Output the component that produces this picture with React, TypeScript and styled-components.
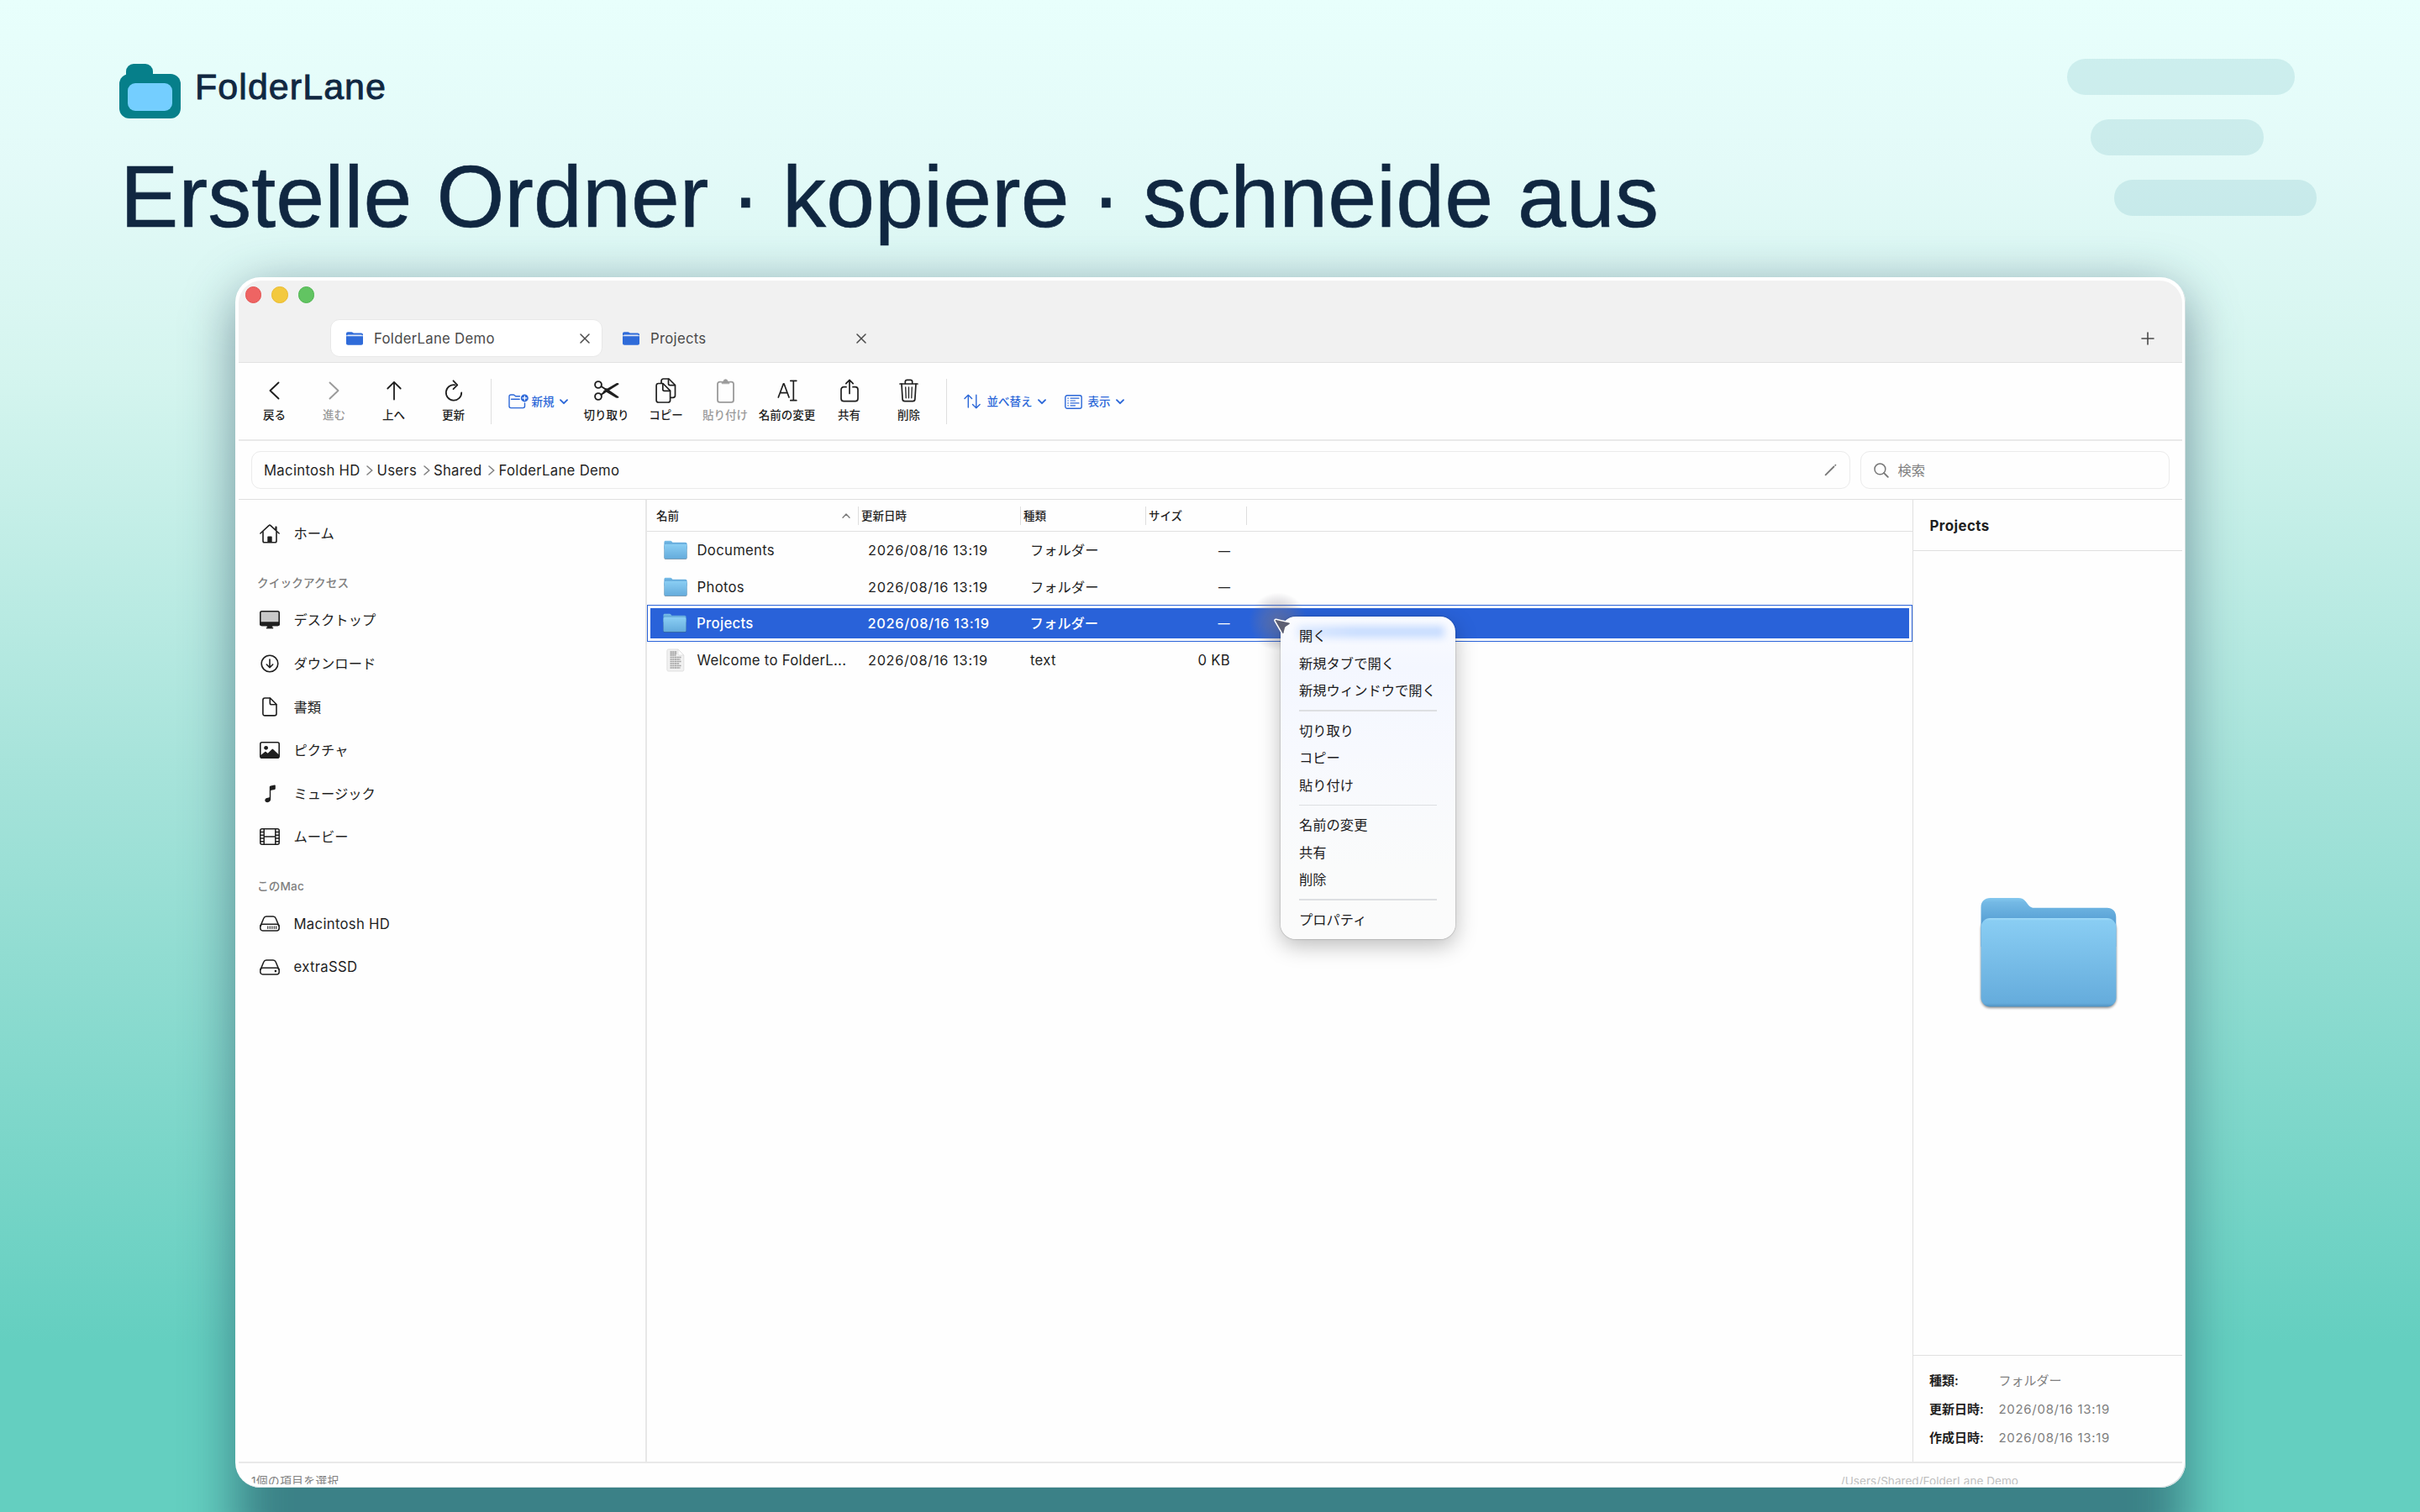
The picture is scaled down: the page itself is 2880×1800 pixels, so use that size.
import React from "react";
import styled, { createGlobalStyle, css } from "styled-components";

const UI_FONT = `Inter, "Noto Sans CJK JP", sans-serif`;

const GlobalStyle = createGlobalStyle`
  html, body { margin: 0; padding: 0; }
  body { width: 2880px; height: 1800px; overflow: hidden; }
  * { box-sizing: border-box; }
`;

/* ---------- poster ---------- */

const Poster = styled.div`
  position: relative;
  width: 2880px;
  height: 1800px;
  overflow: hidden;
  background: linear-gradient(180deg, #e8fffc 0, #e3faf8 200px, #d5f5ef 440px, #a6e3da 920px, #64cfc0 1600px, #64cfc0 1800px);
  color: #102741;
`;

const Hero = styled.header`
  height: 330px;
  padding: 76px 0 0 141px;
`;

const Brand = styled.div`
  display: flex;
  align-items: flex-start;
  height: 66px;
`;

const BrandName = styled.span`
  margin: 2px 0 0 15px;
  font: 400 43px/50px "Liberation Sans", Arial, sans-serif;
  letter-spacing: 1.05px;
  -webkit-text-stroke: 0.9px #102741;
`;

const Headline = styled.h1`
  margin: 32px 0 0 2px;
  font: 400 104px/120px "Liberation Sans", Arial, sans-serif;
  letter-spacing: 0.08px;
  white-space: nowrap;
  -webkit-text-stroke: 0.6px #102741;
`;

const Dot = styled.span`
  margin: 0 -2.6px;
`;

const Lane = styled.div<{ $x: number; $y: number; $w: number }>`
  position: absolute;
  left: ${(p) => p.$x}px;
  top: ${(p) => p.$y}px;
  width: ${(p) => p.$w}px;
  height: 43px;
  border-radius: 22px;
  background: rgba(6, 127, 138, 0.115);
`;

const FrameShadow = styled.div`
  position: absolute;
  left: 280px;
  top: 344px;
  width: 2321px;
  height: 1530px;
  border-radius: 40px;
  background: rgba(13, 42, 70, 0.47);
  filter: blur(31px);
`;

const Frame = styled.main`
  position: relative;
  width: 2321px;
  height: 1441px;
  margin-left: 280px;
  padding: 4px;
  border-radius: 30px;
  background: #fff;
  box-shadow: inset -1px -1px 0 #d3dfe0;
`;

const Win = styled.div`
  display: flex;
  flex-direction: column;
  width: 2313px;
  height: 1433px;
  border-radius: 27px;
  overflow: hidden;
  background: #fefefe;
  color: #1f1f1f;
  font: 400 16.3px/20px ${UI_FONT};
  white-space: nowrap;
  & > * { flex: none; }
`;

const Latin = styled.span`
  font-size: 16.7px;
  letter-spacing: 0.3px;
`;

const Digits = styled.span`
  letter-spacing: 0.7px;
`;

/* ---------- title bar ---------- */

const TitleBar = styled.div`
  height: 98px;
  background: #f1f1f1;
  border-bottom: 1px solid #e2e2e2;
`;

const Lights = styled.div`
  display: flex;
  align-items: center;
  gap: 12px;
  height: 34px;
  padding-left: 8px;
`;

const Light = styled.i<{ $fill: string; $edge: string }>`
  width: 19.4px;
  height: 19.4px;
  border-radius: 50%;
  background: ${(p) => p.$fill};
  border: 1px solid ${(p) => p.$edge};
`;

const Tabs = styled.div`
  display: flex;
  align-items: center;
  gap: 5px;
  margin-top: 12px;
  padding: 0 33px 0 109px;
`;

const Tab = styled.div<{ $active?: boolean }>`
  display: flex;
  align-items: center;
  width: 324px;
  height: 45px;
  padding: 0 14px 0 18px;
  border-radius: 11px;
  border: 1px solid transparent;
  color: #4a4a4a;
  ${(p) => p.$active && css`
    background: #fff;
    border-color: #e8e8e8;
  `}
`;

const TabLabel = styled.span`
  flex: 1;
  margin-left: 13px;
`;

const NewTab = styled.span`
  display: flex;
  margin-left: auto;
`;

/* ---------- toolbar ---------- */

const Toolbar = styled.div`
  display: flex;
  align-items: center;
  height: 93px;
  padding-left: 7px;
  border-bottom: 2px solid #e9e9e9;
`;

const ToolButton = styled.div<{ $w?: number; $off?: boolean }>`
  display: flex;
  flex-direction: column;
  align-items: center;
  gap: 7px;
  width: ${(p) => p.$w ?? 71}px;
  height: 55px;
  margin-top: 2px;
  font-size: 13.5px;
  font-weight: 500;
  line-height: 16px;
  color: ${(p) => (p.$off ? "#9a9a9a" : "#1f1f1f")};
`;

const IconBox = styled.span`
  display: flex;
  align-items: center;
  justify-content: center;
  height: 28px;
`;

const ToolDivider = styled.i<{ $before: number; $after: number }>`
  width: 1.5px;
  height: 54px;
  margin: 0 ${(p) => p.$after}px 0 ${(p) => p.$before}px;
  background: #dfdfdf;
`;

const MenuButton = styled.div<{ $gap: number; $after: number }>`
  display: flex;
  align-items: center;
  margin: 1px ${(p) => p.$after}px 0 0;
  font-size: 13.5px;
  font-weight: 500;
  color: #2b67d8;
  & > span { margin: 0 6px 0 ${(p) => p.$gap}px; }
`;

/* ---------- address row ---------- */

const AddressRow = styled.div`
  display: flex;
  gap: 12px;
  height: 70px;
  padding: 12px 15px 0 14.5px;
  border-bottom: 1px solid #e0e0e0;
`;

const Field = styled.div<{ $w?: number }>`
  display: flex;
  align-items: center;
  height: 45px;
  border: 1.5px solid #ebebeb;
  border-radius: 11px;
  ${(p) => (p.$w ? `width: ${p.$w}px; padding-left: 15px;` : "flex: 1; padding: 0 15px 0 14.5px;")}
`;

const Crumb = styled(Latin)`
  margin-right: 7.5px;
`;

const CrumbArrow = styled.span`
  display: flex;
  margin-right: 4.4px;
`;

const Push = styled.span`
  display: flex;
  margin-left: auto;
`;

const Placeholder = styled.span`
  margin-left: 10.5px;
  color: #808080;
`;

/* ---------- body ---------- */

const Body = styled.div`
  display: flex;
  height: 1147px;
  border-bottom: 2px solid #e9e9e9;
`;

const Sidebar = styled.nav`
  width: 486px;
  padding: 14.5px 0 0 25px;
  border-right: 2px solid #e7e7e7;
`;

const SideItem = styled.div`
  display: flex;
  align-items: center;
  height: 51.6px;
`;

const SideIcon = styled.span`
  display: flex;
  justify-content: center;
  width: 24px;
  margin-right: 16.5px;
`;

const SideLabel = styled.div`
  display: flex;
  align-items: flex-end;
  height: 51.6px;
  margin-left: -3px;
  padding-bottom: 8.5px;
  font-size: 13.6px;
  font-weight: 500;
  letter-spacing: 0.15px;
  color: #808080;
`;

const List = styled.section`
  width: 1506px;
`;

const COLS = "252px 193px 149px 120px";

const ListHead = styled.div`
  display: grid;
  grid-template-columns: ${COLS};
  align-items: center;
  height: 38px;
  border-bottom: 1px solid #e0e0e0;
  font-size: 13.5px;
  font-weight: 500;
`;

const HeadCell = styled.div<{ $pad: number }>`
  display: flex;
  align-items: center;
  justify-content: space-between;
  height: 22px;
  padding: 1px 9px 0 ${(p) => p.$pad}px;
  border-right: 1.5px solid #dedede;
`;

const Row = styled.div<{ $selected?: boolean }>`
  height: 43.5px;
  padding-top: 1px;
  color: ${(p) => (p.$selected ? "#fff" : "#1f1f1f")};
  ${(p) => p.$selected && css`
    padding: 2.6px;
    border: 1.4px solid #2962d9;
    font-weight: 500;
  `}
`;

const RowFill = styled.div<{ $selected?: boolean }>`
  display: grid;
  grid-template-columns: ${COLS};
  align-items: center;
  height: 100%;
  ${(p) => p.$selected && css`
    background: #2962d9;
    grid-template-columns: 248px 193px 149px 120px;
    & > div:first-child { padding-left: 15.5px; }
  `}
`;

const NameCell = styled.div`
  display: flex;
  align-items: center;
  padding-left: 19.5px;
`;

const FileIcon = styled.span`
  display: flex;
  justify-content: center;
  width: 28px;
  margin-right: 12px;
`;

const Cell = styled.div<{ $end?: boolean }>`
  padding-left: 11px;
  ${(p) => p.$end && "padding-right: 20px; text-align: right;"}
`;

const Dash = styled.span`
  font-size: 14px;
`;

/* ---------- preview ---------- */

const Preview = styled.aside`
  display: flex;
  flex-direction: column;
  flex: 1;
  border-left: 1px solid #e0e0e0;
`;

const PreviewTitle = styled.div`
  display: flex;
  align-items: center;
  height: 61px;
  padding: 1px 0 0 19.5px;
  border-bottom: 1px solid #e0e0e0;
  font-size: 16.9px;
  font-weight: 700;
  letter-spacing: 0.4px;
`;

const PreviewArt = styled.div`
  display: flex;
  flex: 1;
  align-items: center;
  justify-content: center;
  padding: 1px 0 0 2px;
`;

const Facts = styled.dl`
  display: grid;
  grid-template-columns: 82.5px 1fr;
  grid-auto-rows: 34px;
  align-items: center;
  height: 127px;
  margin: 0;
  padding: 12.5px 0 0 19px;
  border-top: 1px solid #e0e0e0;
  font-size: 15px;
  & > dt { font-weight: 600; }
  & > dd { margin: 0; color: #808080; }
`;

const StatusBar = styled.footer`
  display: flex;
  justify-content: space-between;
  padding: 11px 195px 0 15px;
  font-size: 13.6px;
  color: #808080;
  & > span:first-child { letter-spacing: 0.5px; }
  & > span:last-child { color: #c0c0c0; }
`;

/* ---------- context menu ---------- */

const CursorGlow = styled.div`
  position: absolute;
  left: 1206px;
  top: 375px;
  width: 70px;
  height: 70px;
  border-radius: 50%;
  background: radial-gradient(circle, rgba(125, 118, 130, 0.58) 0, rgba(125, 120, 135, 0.34) 35%, rgba(140, 140, 150, 0) 70%);
`;

const Menu = styled.div`
  position: absolute;
  left: 1244px;
  top: 404px;
  width: 208px;
  height: 384px;
  padding: 7px 22px;
  border-radius: 18px;
  overflow: hidden;
  background: linear-gradient(180deg, #fbfcff 0, #f4f7ff 60px, #f7f9fe 160px, #fafbfb 300px, #fbfbfb 100%);
  box-shadow: 0 0 1.5px rgba(0, 0, 0, 0.5), 0 8px 26px rgba(0, 0, 0, 0.26);
  font-size: 16.3px;
  font-family: ${UI_FONT};
  color: #1c1c1e;
  white-space: nowrap;
  &::before {
    content: "";
    position: absolute;
    left: 20px;
    top: 11px;
    width: 175px;
    height: 14px;
    background: linear-gradient(90deg, #dbe8ff, #c6dbff 40%, #c6dbff);
    filter: blur(5px);
  }
`;

const MenuItem = styled.div`
  position: relative;
  height: 32.7px;
  line-height: 32.7px;
`;

const MenuRule = styled.i`
  display: block;
  height: 1.4px;
  margin: 6.3px 0 6.8px;
  background: #dddfe2;
`;

const Pointer = styled.svg`
  position: absolute;
  left: 1234px;
  top: 404px;
`;

/* ---------- drawings ---------- */

const stroke = {
  fill: "none",
  stroke: "currentColor",
  strokeWidth: 1.6,
  strokeLinecap: "round" as const,
  strokeLinejoin: "round" as const,
};

const BrandMark = () => (
  <svg width="76" height="66" viewBox="0 0 76 66">
    <rect x="9" y="0" width="32" height="30" rx="9" fill="#067f8a" />
    <rect x="1" y="12" width="73" height="53" rx="12" fill="#067f8a" />
    <rect x="11" y="23" width="53" height="33" rx="9" fill="#74ceff" />
  </svg>
);

const TabFolder = () => (
  <svg width="20" height="16" viewBox="0 0 20 16" fill="#2f6bd9">
    <path d="M0 4V2.4C0 1 .8.3 2 .3h4.2c.8 0 1.300.2 1.900.7l.7.6h9c1.400 0 2.200.8 2.200 2.100V4z" />
    <path d="M0 5.300h20v8.300c0 1.400-.8 2.200-2.200 2.200H2.200C.8 15.800 0 15 0 13.600z" />
    <path d="M0 3.700h20v1.900H0z" opacity=".35" />
    <path d="M1.500 4.100h17" stroke="#fff" strokeWidth="1" />
  </svg>
);

const Close = () => (
  <svg width="12" height="12" viewBox="0 0 12 12" {...stroke} strokeWidth={1.5}>
    <path d="M1 1l10 10M11 1L1 11" />
  </svg>
);

const Plus = () => (
  <svg width="16" height="16" viewBox="0 0 16 16" {...stroke} stroke="#4a4a4a">
    <path d="M8 1v14M1 8h14" />
  </svg>
);

const ChevronBig = ({ flip }: { flip?: boolean }) => (
  <svg width="13" height="22" viewBox="0 0 13 22" {...stroke} strokeWidth={1.9}>
    <path d={flip ? "M1.500 1.500L11.500 11l-10 9.500" : "M11.500 1.500L1.500 11l10 9.500"} />
  </svg>
);

const ArrowUp = () => (
  <svg width="18" height="24" viewBox="0 0 18 24" {...stroke} strokeWidth={1.8}>
    <path d="M9 22.500V1.800M1.300 9.500L9 1.800l7.700 7.700" />
  </svg>
);

const Refresh = () => (
  <svg width="22" height="27" viewBox="0 0 22 27" {...stroke} strokeWidth={1.8}>
    <path d="M12.500 6.300A9.200 9.200 0 1 0 20.200 15.400" />
    <path d="M10.500 1.300l4.800 5.100-4.800 4.800" />
  </svg>
);

const Scissors = () => (
  <svg width="30" height="24" viewBox="0 0 30 24" fill="none" stroke="currentColor" strokeWidth="1.9">
    <circle cx="5" cy="5" r="3.900" />
    <circle cx="5" cy="19" r="3.900" />
    <path d="M8.500 7l4.200 2.800M8.500 17l3.400-3" strokeLinecap="round" />
    <path d="M10.500 14.300L11.500 12L26.500 3.200c1.200-.6 2.600-.3 3 .6.200.400 0 .7-.4.900L14 14.300l-3 1.900z" fill="currentColor" stroke="none" />
    <path d="M11.500 8.900l3.400.4L29.200 19.200c.4.300.4.700.1 1-.8.8-2.200.8-3.300.2L15 14z" fill="currentColor" stroke="none" />
  </svg>
);

const CopyIcon = () => (
  <svg width="25" height="30" viewBox="0 0 25 30" {...stroke} strokeWidth={1.7}>
    <path d="M7 6V3.700C7 2 7.900 1 9.600 1H16l7.500 7.500v12.300c0 1.700-.9 2.600-2.600 2.600h-2.600" />
    <path d="M15.500 1.300v5.400c0 1.300.6 1.900 1.900 1.900h5.700" />
    <path d="M3.700 6.500H9l8.600 8.600v11.300c0 1.700-.9 2.600-2.600 2.600H3.700C2 29 1.100 28.100 1.100 26.400V9.100c0-1.700.9-2.600 2.600-2.600z" fill="#fefefe" />
    <path d="M8.800 6.800v6.600c0 1.300.6 1.900 1.900 1.900h6.600" />
  </svg>
);

const PasteIcon = () => (
  <svg width="21" height="29" viewBox="0 0 21 29" {...stroke} strokeWidth={1.8}>
    <path d="M5.500 3.700H3.600C2 3.700 1 4.600 1 6.300v18.900c0 1.700 1 2.600 2.600 2.600h13.800c1.600 0 2.600-.9 2.600-2.600V6.300c0-1.700-1-2.600-2.600-2.600h-1.900" />
    <path d="M6.200 5.400V4.200c0-.8.500-1.200 1.300-1.200h.7a2.300 2.300 0 0 1 4.600 0h.7c.8 0 1.300.4 1.300 1.200v1.200z" fill="currentColor" strokeWidth=".8" />
  </svg>
);

const RenameIcon = () => (
  <svg width="24" height="26" viewBox="0 0 24 26" {...stroke} strokeWidth={1.7}>
    <path d="M1.300 21L7.400 4.800h.6L14 21M3.400 15.600h8.600" />
    <path d="M19.300 1.500v23M15.800 1.300h7M15.800 24.700h7" />
  </svg>
);

const ShareIcon = () => (
  <svg width="22" height="28" viewBox="0 0 22 28" {...stroke} strokeWidth={1.7}>
    <path d="M7 9.700H4.200C2.200 9.700 1 10.900 1 12.900V23.500c0 2 1.200 3.200 3.200 3.200h13.600c2 0 3.200-1.200 3.200-3.200V12.900c0-2-1.200-3.200-3.200-3.200H15" />
    <path d="M11 17.500V1.500M6.800 5.600L11 1.300l4.200 4.300" />
  </svg>
);

const TrashIcon = () => (
  <svg width="23" height="28" viewBox="0 0 23 28" {...stroke} strokeWidth={1.7}>
    <path d="M1 6h21M7.300 5.800V3.500c0-1.400.8-2.200 2.200-2.200h4c1.400 0 2.200.8 2.200 2.200v2.300" />
    <path d="M3 6.200l1.100 17.900c.1 1.600 1 2.500 2.600 2.500h9.600c1.600 0 2.500-.9 2.600-2.500L20 6.200" />
    <path d="M7.700 9.800l.5 13M11.500 9.800v13M15.300 9.800l-.5 13" strokeWidth="1.300" />
  </svg>
);

const NewFolderIcon = () => (
  <svg width="24" height="18" viewBox="0 0 24 18" {...stroke} strokeWidth={1.4}>
    <path d="M13.500 2.800H8.600L7.300 1.600C6.900 1.200 6.500 1 5.900 1H3C1.700 1 1 1.700 1 3v11.600c0 1.300.7 2 2 2h14.500c1.300 0 2-.7 2-2V11M3.500 6.200h9.700" />
    <circle cx="19.300" cy="4.900" r="4.500" fill="currentColor" stroke="none" />
    <path d="M19.300 2.500v4.800M16.900 4.900h4.800" stroke="#fff" strokeWidth="1.200" />
  </svg>
);

const SortIcon = () => (
  <svg width="20" height="18" viewBox="0 0 20 18" {...stroke} strokeWidth={1.4}>
    <path d="M5.300 16V1.200M1 5.600l4.300-4.400 4.300 4.400M14.800 1.200V16.800M10.500 12.400l4.300 4.400 4.300-4.400" />
  </svg>
);

const ViewIcon = () => (
  <svg width="21" height="17" viewBox="0 0 21 17" {...stroke} strokeWidth={1.4}>
    <rect x=".8" y=".8" width="19.400" height="15.400" rx="2.200" />
    <path d="M3.800 4.100h.6M3.800 7h.6M3.800 9.900h.6M3.800 12.800h.6" strokeWidth="1.200" />
    <path d="M7 4.100h10M7 7h5.500M7 9.900h10M7 12.800h5.500" strokeWidth="1.200" />
  </svg>
);

const ChevronDown = () => (
  <svg width="10" height="7" viewBox="0 0 10 7" {...stroke} strokeWidth={1.9}>
    <path d="M1 1.200l4 4 4-4" />
  </svg>
);

const CrumbChevron = () => (
  <svg width="8" height="12" viewBox="0 0 8 12" {...stroke} stroke="#808080" strokeWidth={1.5}>
    <path d="M1 1l5.800 5L1 11" />
  </svg>
);

const Pencil = () => (
  <svg width="15" height="15" viewBox="0 0 15 15" stroke="#777" strokeWidth="1.800" strokeLinecap="round">
    <path d="M1.600 13.400L11.500 3.500M13.200 1.800l.2-.2" />
  </svg>
);

const SearchIcon = () => (
  <svg width="18" height="18" viewBox="0 0 18 18" {...stroke} stroke="#777" strokeWidth={1.5}>
    <circle cx="7.400" cy="7.400" r="6.400" />
    <path d="M12.100 12.100l4.700 4.700" strokeWidth="1.900" />
  </svg>
);

const SortCaret = () => (
  <svg width="10" height="6" viewBox="0 0 10 6" {...stroke} stroke="#777" strokeWidth={1.3}>
    <path d="M1 5.200L5 1l4 4.200" />
  </svg>
);

const HomeIcon = () => (
  <svg width="24" height="23" viewBox="0 0 24 23" {...stroke}>
    <path d="M.9 11L11 1.700c.6-.6 1.400-.6 2 0L23.100 11M19.200 7.200V3.300M19.800 3.300v4" />
    <path d="M4 9v11c0 1.200.6 1.800 1.800 1.800h12.400c1.200 0 1.800-.6 1.800-1.800V9" />
    <path d="M9.300 21.500v-6c0-.7.400-1.100 1.100-1.100h3.200c.7 0 1.100.4 1.100 1.100v6z" fill="currentColor" stroke="none" />
  </svg>
);

const DesktopIcon = () => (
  <svg width="24" height="22" viewBox="0 0 24 22" {...stroke}>
    <rect x=".8" y=".8" width="22.400" height="16.600" rx="1.800" fill="#c9c9c9" />
    <path d="M.8 14h22.400v1.600c0 1.200-.6 1.800-1.800 1.800H2.600c-1.200 0-1.800-.6-1.800-1.800z" fill="currentColor" />
    <path d="M9.200 18h5.600v2.400h1.200V21H8v-.6h1.200z" fill="currentColor" strokeWidth=".8" />
  </svg>
);

const DownloadIcon = () => (
  <svg width="22" height="22" viewBox="0 0 22 22" {...stroke}>
    <circle cx="11" cy="11" r="9.800" />
    <path d="M11 6v9.500M7.300 12l3.700 3.700 3.700-3.700" />
  </svg>
);

const DocIcon = () => (
  <svg width="18" height="23" viewBox="0 0 18 23" {...stroke}>
    <path d="M3.200 1H9.500L17 8.500v11c0 1.600-.8 2.400-2.400 2.400H3.200C1.600 21.900.9 21.100.9 19.500V3.400C.9 1.800 1.600 1 3.200 1z" />
    <path d="M9.300 1.300v5.600c0 1.200.6 1.800 1.800 1.800h5.600" />
  </svg>
);

const PictureIcon = () => (
  <svg width="24" height="20" viewBox="0 0 24 20" {...stroke}>
    <rect x=".8" y=".8" width="22.400" height="18.400" rx="2" />
    <circle cx="7.600" cy="7.300" r="2.400" fill="currentColor" stroke="none" />
    <path d="M1 16.300l5-4.100c.6-.5 1.200-.5 1.800 0l1.900 1.600 4.700-4.600c.6-.6 1.300-.6 1.900 0l6.700 6.400V18c0 .7-.5 1.200-1.200 1.200H2.200C1.500 19.200 1 18.700 1 18z" fill="currentColor" stroke="none" />
  </svg>
);

const MusicIcon = () => (
  <svg width="13" height="22" viewBox="0 0 13 22" fill="currentColor">
    <path d="M5.800 3.200c0-1 .4-1.500 1.300-1.700l4.700-1c.6-.1 1 .2 1 .8v3.500c0 .6-.3.900-.9 1.100l-4 .9c-.5.100-.7.300-.7.800v9.700c0 2.300-1.600 3.900-3.900 3.900-1.800 0-3-1-3-2.500 0-1.400 1-2.400 2.500-2.700l1.800-.4c.8-.2 1.200-.6 1.200-1.400z" />
  </svg>
);

const MovieIcon = () => (
  <svg width="24" height="20" viewBox="0 0 24 20" {...stroke} strokeWidth={1.5}>
    <rect x=".8" y=".8" width="22.400" height="18.400" rx="2" />
    <path d="M5.200 1v18M18.800 1v18M5.200 10h13.600M1 4.400h4M1 8.200h4M1 12h4M1 15.800h4M19 4.400h4M19 8.200h4M19 12h4M19 15.800h4" />
  </svg>
);

const DriveIcon = ({ internal }: { internal?: boolean }) => (
  <svg width="24" height="19" viewBox="0 0 24 19" {...stroke} strokeWidth={1.5}>
    <path d="M1 12.400L4.800 3.200C5.400 1.700 6.300 1 7.900 1h8.200c1.600 0 2.500.7 3.100 2.200L23 12.400" />
    <path d="M3.700 10.200h16.600c1.800 0 2.900 1.200 2.900 3v1.700c0 1.800-1.100 3-2.900 3H3.700c-1.800 0-2.900-1.200-2.900-3v-1.700c0-1.800 1.100-3 2.900-3z" />
    {internal ? (
      <path d="M9.800 12.800v2.600M12.300 12.800v2.600M14.800 12.800v2.600M17.300 12.800v2.600M19.600 12.800v2.600" strokeWidth="1.100" />
    ) : (
      <circle cx="18.900" cy="14.100" r="1.300" fill="currentColor" stroke="none" />
    )}
  </svg>
);

const MacFolder = ({ id, width }: { id: string; width: number }) => (
  <svg width={width} height={(width * 136) / 166} viewBox="0 0 166 136">
    <defs>
      <linearGradient id={`${id}-back`} x1="0" y1="2" x2="0" y2="46" gradientUnits="userSpaceOnUse">
        <stop offset="0" stopColor="#84c8ee" />
        <stop offset=".12" stopColor="#74b9e5" />
        <stop offset=".5" stopColor="#5fa7d9" />
        <stop offset="1" stopColor="#4a90ca" />
      </linearGradient>
      <linearGradient id={`${id}-front`} x1="0" y1="0" x2="0" y2="1">
        <stop offset="0" stopColor="#a2dcf9" />
        <stop offset=".03" stopColor="#89cdf3" />
        <stop offset=".96" stopColor="#65acdc" />
        <stop offset="1" stopColor="#4f92c2" />
      </linearGradient>
      <filter id={`${id}-soft`} x="-5%" y="-5%" width="110%" height="112%">
        <feGaussianBlur stdDeviation="1.400" />
      </filter>
    </defs>
    <rect x="2.500" y="28" width="161" height="105" rx="11" fill="#000" opacity=".45" filter={`url(#${id}-soft)`} />
    <path d="M2.500 13c0-7 4.500-11 11-11H47c4 0 6.500 1.300 9 4.400l3 4c2 2.500 4 3.300 7.500 3.300h86c6.500 0 10.800 4.300 10.800 11V60H2.500z" fill={`url(#${id}-back)`} />
    <rect x="2.500" y="26" width="161" height="105.500" rx="11" fill={`url(#${id}-front)`} />
  </svg>
);

const TextFile = () => (
  <svg width="22" height="28" viewBox="0 0 22 28">
    <path d="M2.500 1H14l6.800 7v17.300c0 1.100-.6 1.700-1.700 1.700H2.500C1.500 27 .9 26.400.9 25.300V2.700C.9 1.600 1.500 1 2.500 1z" fill="#f1f1f1" stroke="#e0e0e0" />
    <path d="M14 1v5.300c0 1.100.6 1.700 1.700 1.700h5z" fill="#fff" stroke="#dcdcdc" strokeWidth=".8" />
    <path d="M4.500 4h8M4.500 6h8M4.500 8h7M4.500 10.500h13M4.500 13h12M4.500 15.500h13M4.500 18h11M4.500 20.500h13M4.500 23h12" stroke="#a0a0a0" strokeWidth="1.500" strokeDasharray="2.300 .4" />
  </svg>
);

/* ---------- data ---------- */

const places = [
  { label: "デスクトップ", icon: <DesktopIcon /> },
  { label: "ダウンロード", icon: <DownloadIcon /> },
  { label: "書類", icon: <DocIcon /> },
  { label: "ピクチャ", icon: <PictureIcon /> },
  { label: "ミュージック", icon: <MusicIcon /> },
  { label: "ムービー", icon: <MovieIcon /> },
];

const drives = [
  { label: "Macintosh HD", icon: <DriveIcon internal /> },
  { label: "extraSSD", icon: <DriveIcon /> },
];

const STAMP = "2026/08/16 13:19";

const files = [
  { name: "Documents", kind: "フォルダー", size: "—" },
  { name: "Photos", kind: "フォルダー", size: "—" },
  { name: "Projects", kind: "フォルダー", size: "—", selected: true },
  { name: "Welcome to FolderL...", kind: "text", size: "0 KB" },
];

const crumbs = ["Macintosh HD", "Users", "Shared", "FolderLane Demo"];

const menuGroups = [
  ["開く", "新規タブで開く", "新規ウィンドウで開く"],
  ["切り取り", "コピー", "貼り付け"],
  ["名前の変更", "共有", "削除"],
  ["プロパティ"],
];

const Tool = ({ label, icon, w, off }: { label: string; icon: React.ReactNode; w?: number; off?: boolean }) => (
  <ToolButton $w={w} $off={off}>
    <IconBox>{icon}</IconBox>
    {label}
  </ToolButton>
);

const Place = ({ label, icon, latin }: { label: string; icon: React.ReactNode; latin?: boolean }) => (
  <SideItem>
    <SideIcon>{icon}</SideIcon>
    {latin ? <Latin>{label}</Latin> : label}
  </SideItem>
);

export default function App() {
  return (
    <Poster lang="ja">
      <GlobalStyle />
      <Lane $x={2460} $y={70} $w={271} />
      <Lane $x={2488} $y={142} $w={206} />
      <Lane $x={2516} $y={214} $w={241} />
      <FrameShadow />
      <Hero>
        <Brand>
          <BrandMark />
          <BrandName>FolderLane</BrandName>
        </Brand>
        <Headline>
          Erstelle Ordner <Dot>·</Dot> kopiere <Dot>·</Dot> schneide aus
        </Headline>
      </Hero>
      <Frame>
        <Win>
          <TitleBar>
            <Lights>
              <Light $fill="#ee6463" $edge="#e2504f" />
              <Light $fill="#f3c93f" $edge="#e9b92c" />
              <Light $fill="#62c462" $edge="#4cb44d" />
            </Lights>
            <Tabs>
              <Tab $active>
                <TabFolder />
                <TabLabel>
                  <Latin>FolderLane Demo</Latin>
                </TabLabel>
                <Close />
              </Tab>
              <Tab>
                <TabFolder />
                <TabLabel>
                  <Latin>Projects</Latin>
                </TabLabel>
                <Close />
              </Tab>
              <NewTab>
                <Plus />
              </NewTab>
            </Tabs>
          </TitleBar>

          <Toolbar>
            <Tool label="戻る" icon={<ChevronBig />} />
            <Tool label="進む" icon={<ChevronBig flip />} off />
            <Tool label="上へ" icon={<ArrowUp />} />
            <Tool label="更新" icon={<Refresh />} />
            <ToolDivider $before={8.5} $after={20} />
            <MenuButton $gap={3.5} $after={10.5}>
              <NewFolderIcon />
              <span>新規</span>
              <ChevronDown />
            </MenuButton>
            <Tool label="切り取り" icon={<Scissors />} />
            <Tool label="コピー" icon={<CopyIcon />} />
            <Tool label="貼り付け" icon={<PasteIcon />} off w={70} />
            <Tool label="名前の変更" icon={<RenameIcon />} w={77} />
            <Tool label="共有" icon={<ShareIcon />} />
            <Tool label="削除" icon={<TrashIcon />} />
            <ToolDivider $before={8.5} $after={20} />
            <MenuButton $gap={7.5} $after={22}>
              <SortIcon />
              <span>並べ替え</span>
              <ChevronDown />
            </MenuButton>
            <MenuButton $gap={7} $after={0}>
              <ViewIcon />
              <span>表示</span>
              <ChevronDown />
            </MenuButton>
          </Toolbar>

          <AddressRow>
            <Field>
              {crumbs.map((crumb, i) => (
                <React.Fragment key={crumb}>
                  {i > 0 && (
                    <CrumbArrow>
                      <CrumbChevron />
                    </CrumbArrow>
                  )}
                  <Crumb>{crumb}</Crumb>
                </React.Fragment>
              ))}
              <Push>
                <Pencil />
              </Push>
            </Field>
            <Field $w={368}>
              <SearchIcon />
              <Placeholder>検索</Placeholder>
            </Field>
          </AddressRow>

          <Body>
            <Sidebar>
              <Place label="ホーム" icon={<HomeIcon />} />
              <SideLabel>クイックアクセス</SideLabel>
              {places.map((p) => (
                <Place key={p.label} {...p} />
              ))}
              <SideLabel>このMac</SideLabel>
              {drives.map((d) => (
                <Place key={d.label} latin {...d} />
              ))}
            </Sidebar>

            <List>
              <ListHead>
                <HeadCell $pad={11}>
                  名前
                  <SortCaret />
                </HeadCell>
                <HeadCell $pad={3}>更新日時</HeadCell>
                <HeadCell $pad={3}>種類</HeadCell>
                <HeadCell $pad={3}>サイズ</HeadCell>
              </ListHead>
              {files.map((f, i) => (
                <Row key={f.name} $selected={f.selected}>
                  <RowFill $selected={f.selected}>
                    <NameCell>
                      <FileIcon>{f.kind === "text" ? <TextFile /> : <MacFolder id={`row${i}`} width={29} />}</FileIcon>
                      <Latin>{f.name}</Latin>
                    </NameCell>
                    <Cell>
                      <Digits>{STAMP}</Digits>
                    </Cell>
                    <Cell>{f.kind === "text" ? <Latin>{f.kind}</Latin> : f.kind}</Cell>
                    <Cell $end>{f.size === "—" ? <Dash>—</Dash> : <Latin>{f.size}</Latin>}</Cell>
                  </RowFill>
                </Row>
              ))}
            </List>

            <Preview>
              <PreviewTitle>Projects</PreviewTitle>
              <PreviewArt>
                <MacFolder id="preview" width={166} />
              </PreviewArt>
              <Facts>
                <dt>種類:</dt>
                <dd>フォルダー</dd>
                <dt>更新日時:</dt>
                <dd>
                  <Digits>{STAMP}</Digits>
                </dd>
                <dt>作成日時:</dt>
                <dd>
                  <Digits>{STAMP}</Digits>
                </dd>
              </Facts>
            </Preview>
          </Body>

          <StatusBar>
            <span>1個の項目を選択</span>
            <span>/Users/Shared/FolderLane Demo</span>
          </StatusBar>
        </Win>

        <CursorGlow />
        <Menu>
          {menuGroups.map((group, g) => (
            <React.Fragment key={group[0]}>
              {g > 0 && <MenuRule />}
              {group.map((item) => (
                <MenuItem key={item}>{item}</MenuItem>
              ))}
            </React.Fragment>
          ))}
        </Menu>
        <Pointer width="24" height="24" viewBox="0 0 24 24">
          <path d="M4.800 3.300l15.600 3.500c1.500.4 1.700 1.900.5 2.700l-4.200 2.900c-.5.400-.8.800-1 1.400l-1.500 6c-.4 1.300-1.900 1.500-2.500.3L3.200 5.400c-.6-1.300.2-2.400 1.600-2.100z" fill="#5d5f73" stroke="#fff" strokeWidth="1.500" />
        </Pointer>
      </Frame>
    </Poster>
  );
}
